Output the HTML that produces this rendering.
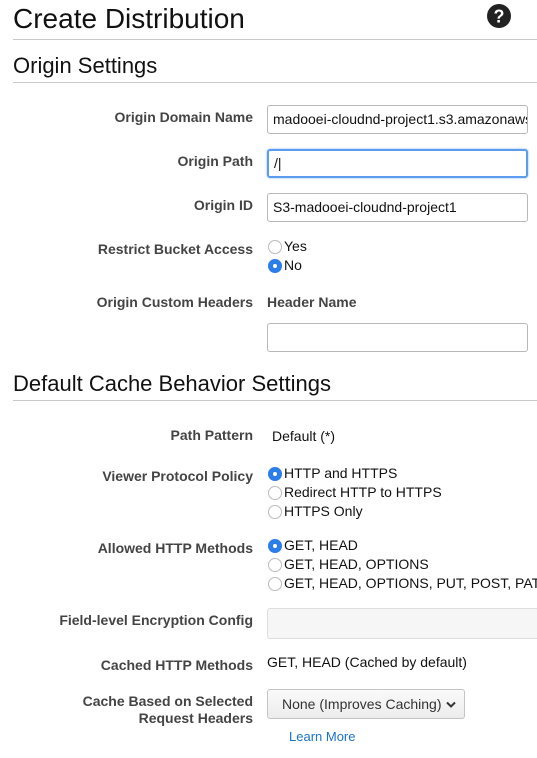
<!DOCTYPE html>
<html><head><style>
body{margin:0;width:537px;height:758px;overflow:hidden;background:#fff;font-family:"Liberation Sans",Arial,sans-serif;color:#222;position:relative}
.a{position:absolute;white-space:nowrap}
.l{position:absolute;right:284px;font-weight:bold;font-size:14px;color:#444;text-align:right;white-space:nowrap;line-height:17px}
.hr{position:absolute;left:13px;right:0;height:1px;background:#c8c8c8}
.in{position:absolute;left:267px;width:254px;height:27px;border:1px solid #b8b8b8;border-radius:3px;font-size:14px;line-height:27px;padding-left:5px;box-sizing:content-box;overflow:hidden;white-space:nowrap;color:#111}
.r{position:absolute;left:268px;width:12px;height:12px;border:1px solid #bbb;border-radius:50%;background:#fff}
.r.on{background:#2b7de9;border-color:#2b7de9}
.r.on:after{content:"";position:absolute;left:4px;top:4px;width:4px;height:4px;border-radius:50%;background:#fff}
.o{position:absolute;left:284px;font-size:14px;color:#111;line-height:17px;white-space:nowrap}
.clip{position:absolute;left:0;top:0;width:537px;height:758px;overflow:hidden}
</style></head><body><div class="clip">
<div class="a" style="left:13px;top:3px;font-size:28px;color:#111">Create Distribution</div>
<svg class="a" style="left:486px;top:3px" width="26" height="26" viewBox="0 0 26 26"><circle cx="13" cy="13" r="12" fill="#222"/><text x="13" y="19.5" text-anchor="middle" font-family="Liberation Sans" font-weight="bold" font-size="18" fill="#fff">?</text></svg>
<div class="hr" style="top:39px"></div>
<div class="a" style="left:13px;top:53px;font-size:22px;color:#111">Origin Settings</div>
<div class="hr" style="top:82px"></div>

<div class="l" style="top:109px">Origin Domain Name</div>
<div class="in" style="top:105px">madooei-cloudnd-project1.s3.amazonaws.com</div>
<div class="l" style="top:153px">Origin Path</div>
<div class="in" style="top:149px;border:2px solid #5b9bf0;height:25px;width:252px;box-shadow:0 0 2px #8ab8f5;line-height:25px">/|</div>
<div class="l" style="top:197px">Origin ID</div>
<div class="in" style="top:193px">S3-madooei-cloudnd-project1</div>
<div class="l" style="top:241px">Restrict Bucket Access</div>
<div class="r" style="top:240px"></div><div class="o" style="top:238px">Yes</div>
<div class="r on" style="top:259px"></div><div class="o" style="top:257px">No</div>
<div class="l" style="top:294px">Origin Custom Headers</div>
<div class="a" style="left:267px;top:294px;font-size:14px;font-weight:bold;color:#444">Header Name</div>
<div class="in" style="top:323px"></div>

<div class="a" style="left:13px;top:371px;font-size:22px;color:#111">Default Cache Behavior Settings</div>
<div class="hr" style="top:400px"></div>
<div class="l" style="top:427px">Path Pattern</div>
<div class="a" style="left:272px;top:428px;font-size:14px;color:#111">Default (*)</div>
<div class="l" style="top:468px">Viewer Protocol Policy</div>
<div class="r on" style="top:467px"></div><div class="o" style="top:465px">HTTP and HTTPS</div>
<div class="r" style="top:486px"></div><div class="o" style="top:484px">Redirect HTTP to HTTPS</div>
<div class="r" style="top:505px"></div><div class="o" style="top:503px">HTTPS Only</div>
<div class="l" style="top:540px">Allowed HTTP Methods</div>
<div class="r on" style="top:539px"></div><div class="o" style="top:537px">GET, HEAD</div>
<div class="r" style="top:558px"></div><div class="o" style="top:556px">GET, HEAD, OPTIONS</div>
<div class="r" style="top:577px"></div><div class="o" style="top:575px;width:253px;overflow:hidden">GET, HEAD, OPTIONS, PUT, POST, PATCH, DELETE</div>
<div class="l" style="top:612px">Field-level Encryption Config</div>
<div class="a" style="left:267px;top:608px;width:280px;height:29px;border:1px solid #ddd;border-radius:3px;background:#f6f6f6"></div>
<div class="l" style="top:657px">Cached HTTP Methods</div>
<div class="a" style="left:267px;top:654px;font-size:14px;color:#111">GET, HEAD (Cached by default)</div>
<div class="l" style="top:693px">Cache Based on Selected<br>Request Headers</div>
<div class="a" style="left:267px;top:689px;width:196px;height:28px;border:1px solid #c4c4c4;border-radius:3px;background:linear-gradient(#fafafa,#ececec);font-size:14px;line-height:28px;color:#333"><span style="margin-left:14px">None (Improves Caching)</span>
<svg style="position:absolute;right:8px;top:11px" width="10" height="7" viewBox="0 0 10 7"><path d="M1 1.5L5 5.5L9 1.5" stroke="#333" stroke-width="2" fill="none"/></svg></div>
<div class="a" style="left:289px;top:729px;font-size:13px;color:#1a73c8">Learn More</div>
</div></body></html>
